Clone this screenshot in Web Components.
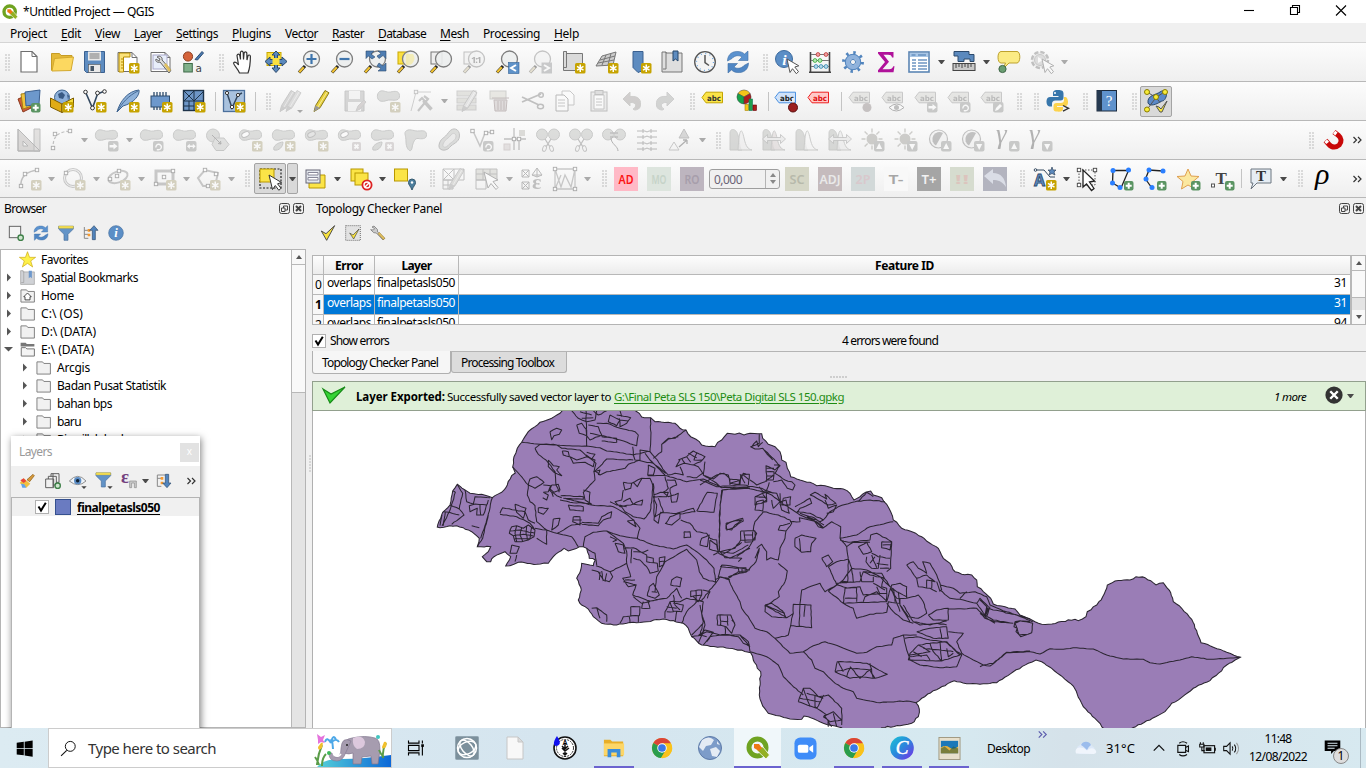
<!DOCTYPE html>
<html lang="en">
<head>
<meta charset="utf-8">
<title>*Untitled Project — QGIS</title>
<style>
html,body{margin:0;height:100%;overflow:hidden}
body{font:12px "Noto Sans","Open Sans",sans-serif;color:#000;background:#f0f0f0}
</style>
</head>
<body>
<qgis-window></qgis-window>
<script>
/* ---------- shared helper ---------- */
const define = (name, css, html, after) => customElements.define(name, class extends HTMLElement {
  connectedCallback() {
    if (this.shadowRoot) return;
    const root = this.attachShadow({mode: 'open'});
    const markup = typeof html === 'function' ? html(this) : html;
    root.innerHTML = `<style>*{box-sizing:border-box}${css}</style>${markup}`;
    if (after) after(this, root);
  }
});

/* ---------- label tracked to a fixed width ---------- */
define('fit-text', ':host{display:inline-block;white-space:pre;flex:none}', '<slot></slot>', el => {
  const w = +el.getAttribute('w');
  if (!w) return;
  const natural = el.getBoundingClientRect().width;
  el.style.letterSpacing = (w - natural) / el.textContent.length + 'px';
  el.style.width = w + 'px';
});

/* ---------- icons ---------- */
const star = '<rect x="13" y="13" width="10.500" height="10.500" rx="1.600" fill="#c6a300"/><path d="M18.250 14.500v7.500M15 16.400l6.500 3.700M21.500 16.400l-6.500 3.700" stroke="#fff" stroke-width="1.500"/>';
const plus = '<rect x="14" y="14" width="9.500" height="9.500" rx="2" fill="#5a9462"/><path d="M18.700 15.700v6M15.700 18.700h6" stroke="#fff" stroke-width="2"/>';
const sq = inner => '<rect x="13" y="13" width="10.500" height="10.500" rx="2" fill="#8c908c"/>' + inner;
const bArrow = sq('<path d="M14.500 17h4v-2l4 3.200-4 3.200v-2h-4z" fill="#fff"/>');
const bRot = sq('<path d="M16 19.500a2.700 2.700 0 1 1 2.600 2.200M16.800 21.700h2.500" stroke="#fff" stroke-width="1.400" fill="none"/>');
const bBoth = sq('<path d="M14 18.300l2.800-2.600v1.800h3v-1.800l2.800 2.600-2.800 2.600v-1.800h-3v1.800z" fill="#fff"/>');
const bX = '<rect x="14" y="14" width="9" height="9" rx="1.500" fill="#c8a8ac"/><path d="M16.500 16.500l4 4M20.500 16.500l-4 4" stroke="#fff" stroke-width="1.800"/>';
const bUp = sq('<path d="M18.200 15l3 6h-6z" fill="#fff"/>');
const bDn = sq('<path d="M18.200 22l3-6h-6z" fill="#fff"/>');
const bEdit = sq('<path d="M15 22l1-3 4-4 2 2-4 4z" fill="#fff"/>');
const blob = '<path d="M1.500 3.500C5-.5 9 4 13.500 3S22 1.500 22.500 6.500 18 11.500 14 11 8 13 4 12.200-.5 6.500 1.500 3.500Z" fill="#b3b9b0" stroke="#888e88"/>';
const lens = '<path d="M2 22.500l6-6.500" stroke="#222" stroke-width="3.200"/><path d="M2.200 22.300l4.600-5" stroke="#f1c232" stroke-width="2.200"/><circle cx="14.500" cy="9" r="8" fill="#eceeee" fill-opacity=".9" stroke="#7d7d7d" stroke-width="1.300"/>';
const tag = (f, s, t) => `<path d="M1 8.500l4-5.300h16.500v10.600H5z" fill="${f}" stroke="${s}"/><text x="13" y="11.500" font-family="DejaVu Sans,sans-serif" font-size="7.500" font-weight="700" text-anchor="middle" fill="${t}" textLength="14" lengthAdjust="spacingAndGlyphs">abc</text>`;
const pencil = (x, f = '#e8d13a', s = '#8a7a20') => `<g transform="translate(${x} 0)"><path d="M3 22.500l1.600-6L14 1.500l4 2.300-9 15z" fill="${f}" stroke="${s}"/><path d="M3 22.500l1.600-6 4.400 2.500z" fill="#999"/><path d="M7 18L16 3" stroke="#fff" stroke-opacity=".5"/></g>`;
const sheet = '<path d="M2 2.500h14l5 5v14H2z" fill="#fff" stroke="#6f6f6f"/><path d="M16 2.500v5h5" fill="none" stroke="#6f6f6f"/>';
const dot = (x, y, f = '#fff', s = '#444') => `<rect x="${x - 1.7}" y="${y - 1.7}" width="3.400" height="3.400" fill="${f}" stroke="${s}" stroke-width=".9"/>`;
const circ = (x, y, f = '#2a7fff', s = 'none') => `<circle cx="${x}" cy="${y}" r="2.500" fill="${f}" stroke="${s}"/>`;
const sync = '<path d="M1.500 11C1.500 4 7 1 12 1.500c2.500 0 5 1 6.500 2.600L22 1v9.500h-9.500L16 7C12.500 4.500 8 6 6 8.500Z" fill="#5b92cf" stroke="#3f6fa5" stroke-width=".6"/><path d="M22.500 13c0 7-5.500 10-10.500 9.500-2.500 0-5-1-6.500-2.600L2 23v-9.500h9.500L8 17c3.500 2.500 8 1 10-1.500Z" fill="#4f86c4" stroke="#3f6fa5" stroke-width=".6"/>';
const cursor = '<path d="M12 9l3 13.500 2.500-3.800 3.800 5 2.200-2-3.700-4.700 4-1.200z" fill="#fff" stroke="#555" stroke-width="1"/>';
const chrome = '<circle cx="12" cy="12" r="11" fill="#f9c21b"/><path d="M12 12L2.500 6.500A11 11 0 0 1 21.600 6.600L21 8H12Z" fill="#db4437"/><path d="M2.500 6.500A11 11 0 0 0 11 23l5-8.500L12 12Z" fill="#2a9d4c"/><path d="M11 23A11 11 0 0 0 21.700 6.800H12l4 8z" fill="#f9c21b"/><circle cx="12" cy="12" r="5.200" fill="#fff"/><circle cx="12" cy="12" r="4.200" fill="#3b78e7"/>';
const scissors = '<path d="M9 11l5 8M15 11l-5 8" stroke="#777" stroke-width="1.300"/><ellipse cx="8.500" cy="20.500" rx="1.800" ry="3" fill="none" stroke="#888" transform="rotate(20 8.500 20.500)"/><ellipse cx="15.500" cy="20.500" rx="1.800" ry="3" fill="none" stroke="#888" transform="rotate(-20 15.500 20.500)"/>';
const twoBlobs = '<circle cx="6" cy="6.500" r="5.500" fill="#b3b9b0" stroke="#888e88"/><circle cx="18" cy="6.500" r="5.500" fill="#b3b9b0" stroke="#888e88"/>';
const hist = (a, b) => `<path d="M1 22V5c0-5 6-5 8 2s1 13 4 15z" fill="${a}" stroke="#8f958c"/><path d="M9 22c1-18 3-26 6-12 2 9 4 11 8 12z" fill="${b}" fill-opacity=".7" stroke="#8f958c"/>`;
const hArrows = '<path d="M.5 11l5-4.500v3h13v-3l5 4.500-5 4.500v-3h-13v3z" fill="#ddd" stroke="#777" stroke-width=".8"/>';
const sun = '<circle cx="11" cy="11" r="5.500" fill="#98947a"/><path d="M11 .5v4M11 17.500v4M.5 11h4M17.500 11h4M3.600 3.600l3 3M18.400 3.600l-3 3M3.600 18.400l3-3" stroke="#98947a" stroke-width="1.400"/>';
const contrast = '<circle cx="10.500" cy="11" r="9" fill="#eee" stroke="#777" stroke-width="1.200"/><path d="M15 5a7 7 0 1 0-7 12.500z" fill="#777"/>';
const gamma = '<text x="0" y="15" font-size="27" font-style="italic" font-family="Liberation Serif,serif" fill="#555">γ</text>';
const wrench = '<path d="M3 3l3-1.500 5 5 .5 4L22 20l-2.500 2.500L9.500 12l-4-.5L1 7l4 .5 2-2z" fill="#ccc" stroke="#666"/><path d="M12 13l8 9 2.500-2-8.500-9z" fill="#e0c060" stroke="#8a6d20" stroke-width=".7"/>';
const funnel = '<path d="M1 2h22v4l-8 8v9H9v-9L1 6z" fill="#6293c7" stroke="#476e9b"/><path d="M1 1.500h22v3.500H1z" fill="#f5df55" stroke="#b0a030" stroke-width=".5"/>';
const folder = '<path d="M1.500 3h9l2 2.500h10.500v17h-21.500z" fill="#f1f1f1" stroke="#7c7c7c" stroke-width="1.500"/>';
const block = (bg, fg, t) => `<rect width="24" height="24" fill="${bg}"/><text x="12" y="17" font-size="13" font-weight="600" font-family="Noto Sans,sans-serif" text-anchor="middle" fill="${fg}" textLength="${t.length > 2 ? 21 : 15}" lengthAdjust="spacingAndGlyphs">${t}</text>`;
const mesh = '<rect x="1.500" y="1.500" width="20" height="20" fill="#6d96c7" stroke="#1e3349" stroke-width="1.400"/><path d="M12 2v20M2 12h20M2 2l10 10M12 2L2 12M22 2L12 12M7 12v10M2 17h10" stroke="#1e3349" fill="none"/>';

const icons = {
  qgis: '<circle cx="11.500" cy="11.500" r="8.500" fill="none" stroke="#6fa321" stroke-width="5"/><path d="M11 11h6l6.500 8-3.500 4-9-8.500z" fill="#93b023" stroke="#fff" stroke-width=".8"/><path d="M8 8h5l3 4-3 3-5-3z" fill="#ee7913"/>',
  new: '<path d="M4 1.500h11l5 5v15.500H4z" fill="#fff" stroke="#6f6f6f" stroke-width="1.200"/><path d="M15 1.500v5h5" fill="none" stroke="#6f6f6f"/>',
  open: '<path d="M1.500 20.500V3.500h8l1.500 2h11v4" fill="#e4b938" stroke="#c69c26"/><path d="M2 21L4.500 8.500l19-1.500-2.500 13.500z" fill="#fcd860" stroke="#d3a92e"/>',
  save: '<path d="M1.500 1.500h20v21H3.500l-2-2z" fill="#5e8cc0" stroke="#3a6090"/><rect x="5" y="1.500" width="13" height="9" fill="#e9e9e9"/><path d="M6.500 4h10M6.500 6h10M6.500 8h10" stroke="#777"/><rect x="5.500" y="14.500" width="12" height="8" fill="#e9e9e9" stroke="#555" stroke-width=".6"/><rect x="7.500" y="16" width="3.500" height="5" fill="#456"/>',
  layout: sheet + '<path d="M3 3h11v4H7.500v15H3z" fill="#fbe27a" stroke="#b68c00"/><path d="M5 9h2M5 12h2M5 15h2M5 18h2" stroke="#b68c00"/>' + star,
  layoutmgr: sheet + '<rect x="4" y="5" width="14" height="14" fill="#e8eefa" stroke="#aac"/><path d="M8 7c2-2 6 0 5 3l9 10-2 3-9-11c-3 1-5-1-4-3l3 2 1-2z" fill="#ddd" stroke="#666"/><path d="M15 15l5 7 2-2-5-7z" fill="#e0c060"/>',
  style: '<circle cx="6" cy="6.500" r="4.600" fill="#d4633a" stroke="#8d3c1e"/><path d="M13 9.500l7-8 1.500 1.500-6 7z" fill="#4a7ab0" stroke="#2f5078"/><rect x="1.800" y="13.500" width="8.500" height="8.500" fill="#7fb08a" stroke="#3e6a48"/><text x="13.500" y="21.500" font-size="10.500" font-family="DejaVu Sans,sans-serif" fill="#444">a</text>',
  hand: '<path d="M8.500 23C6.500 18 3 15.500 2.500 13c1.500-2 3.500 0 5 2L6 5.500c.5-1.800 2.300-1.800 2.800 0l.7 4-.1-7c.5-1.800 2.300-1.800 2.800 0l.3 7 .6-6.500c.5-1.500 2.300-1.500 2.700 0l.2 7 .9-4c.6-1.500 2.300-1.300 2.500.3 0 6-.2 11-2.400 16.700z" fill="#fff" stroke="#333" stroke-width="1.200"/>',
  pan: '<rect x="3" y="2.500" width="14" height="13" fill="#fbe040" stroke="#c9a800"/><path d="M12 1l4 4h-2.500v4.500H18V7l5 4.500-5 4.500v-2.500h-4.500V18H16l-4 4.500L8 18h2.500v-4.500H6V16l-5-4.500L6 7v2.500h4.500V5H8z" fill="#5b89bd" stroke="#2c4a6c"/><rect x="8.500" y="8" width="7" height="7" fill="#fbe040"/>',
  zoomin: lens + '<path d="M14.500 4v10M9.500 9h10" stroke="#3f75ac" stroke-width="2.200"/>',
  zoomout: lens + '<path d="M9.500 9h10" stroke="#3f75ac" stroke-width="2.200"/>',
  zoomfull: lens + '<path d="M3 1h8l-3 3 4 3-3 2-3.500-3L3 8.500zM23 1v7.500l-3-3-4 3-2-2.500 4-2.500-3-2.500zM23 21v-8l-3 3-4-3-2 3 4 2.500-3 2.500z" fill="#4e7db2" stroke="#2c4a6c" stroke-width=".6"/>',
  zoomsel: '<rect x="2" y="2" width="10" height="12" fill="#fbe040" stroke="#c9a800"/>' + lens + '<path d="M10 4v11a7 7 0 0 0 7-11z" fill="#f4eaa0" opacity=".7"/>',
  zoomlayer: '<rect x="2" y="2" width="11" height="12" fill="#eee" stroke="#777"/>' + lens,
  zoomnative: '<rect x="2" y="2" width="11" height="12" fill="#eee" stroke="#777"/>' + lens + '<text x="14.500" y="12.500" font-size="9.500" text-anchor="middle" font-family="Noto Sans,sans-serif" font-weight="700" fill="#555" textLength="11">1:1</text>',
  zoomlast: lens + '<rect x="13.500" y="12.500" width="10.500" height="11" fill="#5e92c9" stroke="#2f5f95" stroke-width=".6"/><path d="M21 15l-5 3 5 3" stroke="#fff" stroke-width="2" fill="none"/>',
  zoomnext: lens + '<rect x="13.500" y="12.500" width="10.500" height="11" fill="#8a9098"/><path d="M16 15l5 3-5 3" stroke="#fff" stroke-width="2" fill="none"/>',
  newmap: '<path d="M1.500 1.500h3v2h16v17h-19z" fill="#dadada" stroke="#777"/><path d="M4.500 1.500v16h-3" stroke="#777"/>' + star,
  map3d: '<path d="M1 16L7 6l14-4-3 13z" fill="#ccc" stroke="#777"/><path d="M5 10l15-4M3 13l16-3M11 5L7 15M16 3.500L13 15" stroke="#777"/>' + star,
  bmnew: '<path d="M5 1.500h10v19l-5 2-5-5z" fill="#5e8cc0" stroke="#3a6090"/>' + star,
  bm: '<path d="M2 2h4v1h16v19H2z" fill="#dedede" stroke="#777"/><path d="M6 2v17H3" fill="none" stroke="#777"/><path d="M13 1h5v10l-2.500-2L13 11z" fill="#5e8cc0" stroke="#24466b"/>',
  clock: '<circle cx="12" cy="12" r="10.300" fill="#f4f4f4" stroke="#555" stroke-width="1.300"/><path d="M12 5v7.500l4 3" stroke="#555" stroke-width="1.500" fill="none"/><circle cx="12" cy="12" r="8.500" fill="none" stroke="#6fa8e0" stroke-width="1.300" stroke-dasharray="1 3.450"/>',
  refresh: sync,
  identify: '<circle cx="9" cy="9" r="8.500" fill="#5b8ec6" stroke="#3d6c9f"/><text x="9.500" y="14.500" font-size="15.500" font-weight="700" font-style="italic" text-anchor="middle" font-family="Liberation Serif,serif" fill="#fff">i</text>' + cursor,
  abacus: '<path d="M2.500 2v20M21.500 2v20M1 22.300h22" stroke="#444" stroke-width="1.600"/><path d="M3 4.500h18M3 10.500h18M3 16.500h18" stroke="#777"/><g stroke-width=".8"><g fill="#f0a0a0" stroke="#b33"><circle cx="10" cy="4.500" r="1.900"/><circle cx="18" cy="4.500" r="1.900"/></g><g fill="#b6e8b6" stroke="#3a3"><circle cx="7" cy="10.500" r="1.900"/><circle cx="12" cy="10.500" r="1.900"/></g><g fill="#b6daf0" stroke="#38a"><circle cx="8" cy="16.500" r="1.900"/><circle cx="13" cy="16.500" r="1.900"/><circle cx="18" cy="16.500" r="1.900"/></g></g>',
  gear: '<circle cx="12" cy="12" r="9.200" fill="none" stroke="#5184bd" stroke-width="3.500" stroke-dasharray="2.400 4.825"/><circle cx="12" cy="12" r="5.500" fill="none" stroke="#8fb2dc" stroke-width="5"/><circle cx="12" cy="12" r="7.700" fill="none" stroke="#5184bd"/><circle cx="12" cy="12" r="2.600" fill="#f4f4f4" stroke="#5184bd"/>',
  sigma: '<path d="M4 2h15.500v5.500h-1.500c-.5-2-1.500-2.700-4-2.700H9.500l5.500 7-6.500 7.500H15c2.500 0 3.500-1 4.300-3H20.500L19.500 22.300H4v-2l7-8.300L4 3.500z" fill="#b0129a"/>',
  table: '<rect x="2" y="2" width="20" height="20" fill="#fff" stroke="#5c86b4" stroke-width="1.600"/><path d="M3 5h18" stroke="#a9c6e6" stroke-width="4"/><path d="M4.500 5h4M11 5h8" stroke="#4476ac"/><path d="M5 10h4M5 13h4M5 16h4M5 19h4M11 10h9M11 13h9M11 16h9M11 19h9" stroke="#6e95c2" stroke-width="1.300"/>',
  measure: '<path d="M2 1.500h15v3h5v7h-4V9h-6v2.500H6V6H2z" fill="#5b89bd" stroke="#2c4a6c"/><rect x="1" y="13.500" width="22" height="7" fill="#c9c9c9" stroke="#444"/><path d="M4 14v4M7 14v3M10 14v4M13 14v3M16 14v4M19 14v3" stroke="#444"/>',
  tip: '<path d="M4 1.500h16c4 0 3.500 11.500 0 11.500h-8l-6 6 2.500-6H4C0 13 0 1.500 4 1.500z" fill="#fbeb84" stroke="#bda22e"/><circle cx="5.500" cy="19" r="3.600" fill="#6a9e72" stroke="#3f6647"/>',
  action: '<circle cx="10" cy="10" r="8" fill="#ddd" stroke="#777" stroke-width="2.500" stroke-dasharray="4.300 2"/><circle cx="10" cy="10" r="5.500" fill="#bbb" stroke="#888"/><path d="M8 7l5 3-5 3z" fill="#fff"/>' + cursor,
  source: '<path d="M1 10l7-3 6 12-8 4z" fill="#cf5c38" stroke="#8a3a20"/><path d="M4 5l8-1 3 13-9 3z" fill="#f0c33c" stroke="#a67f10"/><path d="M8 3l15-2-1 14-13 2z" fill="#6d98cc" stroke="#3a5f90"/>' + plus,
  geopkg: '<circle cx="12" cy="8.500" r="7.500" fill="#8eb1da" stroke="#3d648e"/><path d="M8 5l4-2 3 3-2 4-4-1zM17 5l2 2-1 4z" fill="#385a84"/><path d="M.5 9L12 15v8.500L.5 18z" fill="#e0ac16" stroke="#7c5d00"/><path d="M12 15l11.500-6v9L12 23.500z" fill="#f6dc3c" stroke="#7c5d00"/>' + star,
  shp: '<path d="M2.500 3l7 16 5-14 7-3" fill="none" stroke="#33485f" stroke-width="1.600"/><circle cx="2.500" cy="3" r="1.800" fill="#fff" stroke="#333"/><circle cx="9.500" cy="19" r="1.900" fill="#fff" stroke="#333"/><circle cx="14.500" cy="4" r="1.900" fill="#fff" stroke="#333"/><circle cx="21.500" cy="2.500" r="1.800" fill="#fff" stroke="#333"/>' + star,
  feather: '<path d="M1 23C4 12 12 2 23 1c1 5-5 13-16 16z" fill="#8fb2da" stroke="#3f6490"/><path d="M1 23C6 14 12 7 22 2" stroke="#3f6490" stroke-width=".9" fill="none"/>' + star,
  chip: '<rect x="2" y="7" width="18.500" height="11" fill="#6d98cc" stroke="#2c4a6c"/><path d="M5 3v4M8 3v4M11 3v4M14 3v4M17 3v4M5 18v3M8 18v3M11 18v3M14 18v3" stroke="#2c4a6c" stroke-width="1.300"/>' + star,
  mesh: mesh + star,
  virtual: '<rect x="1.500" y="1.500" width="21" height="21" fill="#a9c2de" stroke="#4b6f9b" stroke-width="1.300"/><path d="M5 4l5 15 6-13 4-2" fill="none" stroke="#33485f" stroke-width="1.500"/><circle cx="5" cy="4" r="1.600" fill="#fff" stroke="#333"/><circle cx="10" cy="18" r="1.700" fill="#fff" stroke="#333"/><circle cx="16" cy="6" r="1.600" fill="#fff" stroke="#333"/>' + star,
  pencils: pencil(-2, '#aaa', '#888') + pencil(4, '#bbb', '#999') + '<path d="M18 21h6l-3 3z" fill="#444"/>',
  pencil: pencil(1),
  saveedit: '<path d="M2 2h19v20H2z" fill="#aaa" stroke="#888"/><rect x="6" y="2" width="11" height="8" fill="#eee"/><rect x="5" y="13" width="13" height="9" fill="#eee"/><path d="M13 22l2-5 6-6 2 2-6 7z" fill="#c0a0a0" stroke="#999"/>',
  addfeat: blob + star,
  vertex: '<path d="M6 3h15M6 3L1 22" stroke="#999"/>' + dot(6, 3, '#eee', '#777') + '<path d="M8 22L18 10l-4-3M13 12l8 9M9 12l3-3 10 11" stroke="#888" stroke-width="2.200" fill="none"/>',
  form: '<rect x="2" y="2" width="19" height="5" fill="#c9c6a6" stroke="#999"/><rect x="2" y="9" width="19" height="5" fill="#c9c6a6" stroke="#999"/><rect x="2" y="16" width="19" height="5" fill="#c9c6a6" stroke="#999"/>' + pencil(4, '#ccc', '#888'),
  trash: '<rect x="2" y="2" width="16" height="8" fill="#d8d4a8" stroke="#998"/><path d="M4 9h17M6 11h13l-1 11H7z" fill="#d8b4b4" stroke="#a66"/><path d="M10 12v9M13 12v9M16 12v9" stroke="#a66"/>',
  cut: '<path d="M1 8l17 8M1 13l19-8" stroke="#777" stroke-width="1.800"/><circle cx="20" cy="6" r="2.300" fill="none" stroke="#777" stroke-width="1.500"/><ellipse cx="19.500" cy="17.500" rx="3" ry="2.300" fill="none" stroke="#777" stroke-width="1.500"/>',
  copy: '<path d="M9 2h8l4 4v10H9z" fill="#fff" stroke="#888"/><path d="M3 6h8l4 4v12H3z" fill="#fff" stroke="#666"/><path d="M5 11h7M5 14h7M5 17h7" stroke="#888"/>',
  paste: '<rect x="4" y="3" width="16" height="19" fill="#ddd" stroke="#777"/><path d="M7 6h10v14H7z" fill="#fff" stroke="#888"/><rect x="8" y="1.500" width="8" height="4" fill="#bbb" stroke="#777"/><path d="M9 10h6M9 13h6M9 16h6" stroke="#888"/>',
  undo: '<path d="M3 10l7-7v4.500c9-1 12 4 10 11-3 3-6 3-7 1.500 4-2 4-7-3-6.500V17z" fill="#a8968e" stroke="#998"/>',
  redo: '<path d="M21 10l-7-7v4.500c-9-1-12 4-10 11 3 3 6 3 7 1.500-4-2-4-7 3-6.500V17z" fill="#a0a8a0" stroke="#999"/>',
  label: tag('#fbe447', '#c3a400', '#333'),
  chart: '<g stroke="#444" stroke-width=".5"><path d="M9 8L2.900 4.500A7 7 0 0 1 15.100 4.500z" fill="#f5c518"/><path d="M9 8v7A7 7 0 0 1 2.900 4.500z" fill="#16a34a"/><path d="M9 8l6.100-3.500A7 7 0 0 1 9 15z" fill="#b01c1c"/></g><rect x="10" y="15.500" width="3.500" height="6" fill="#f5c518" stroke="#a80" stroke-width=".6"/><rect x="14" y="10" width="3.500" height="11.500" fill="#20a050" stroke="#175" stroke-width=".6"/><rect x="18" y="16" width="3.500" height="5.500" fill="#b01c1c" stroke="#600" stroke-width=".6"/>',
  labelpin: tag('#cfe2fa', '#4a90e0', '#222') + '<path d="M19 9v7" stroke="#eee" stroke-width="2"/><circle cx="19" cy="18.500" r="4.500" fill="#9c2020" stroke="#5a0d0d"/>',
  labelred: tag('#ffc9c9', '#ee2020', '#e01010'),
  gl1: tag('#cfcfbc', '#888', '#666') + '<circle cx="19" cy="18.500" r="4.500" fill="#a07878"/>',
  gl2: tag('#cfcfbc', '#888', '#666') + '<path d="M8 18.500q8-7 15 0-8 7-15 0z" fill="#fff" stroke="#555"/><circle cx="15.500" cy="18.500" r="2.500" fill="#777"/>',
  gl3: tag('#cfcfbc', '#888', '#666') + bArrow,
  gl4: tag('#cfcfbc', '#888', '#666') + bRot,
  gl5: tag('#cfcfbc', '#888', '#666') + bEdit,
  python: '<path d="M12 1c-5 0-5 2-5 4v2h5.500v1H4c-3 0-3.500 3-3.500 5s1 4.500 3 4.500H6V15c0-2 1-3.500 3.500-3.500h5c2 0 3-1 3-3V4.500C17.500 2 16 1 12 1z" fill="#3776ab"/><path d="M10 22.500c5 .5 7 0 7-3V18h-6v-1h9c2-.5 2-3 2-4.500S21 8 19.500 8H18v3c0 2-1 3-3.500 3h-4c-2 0-3 1-3 3v3c0 1.500 1 2.300 2.500 2.500z" fill="#fcd34d"/><circle cx="9" cy="4" r="1" fill="#fff"/><path d="M17 16.500l5.500 2.800-5.500 2.800" fill="none" stroke="#333" stroke-width="1.400"/>',
  help: '<rect x="2" y="1.500" width="19.500" height="20.500" fill="#5f92cc" stroke="#1c2b3d"/><rect x="2" y="1.500" width="5" height="20.500" fill="#263950"/><text x="14.200" y="16.500" font-size="15" text-anchor="middle" fill="#fff" font-family="Liberation Serif,serif">?</text>',
  topo: '<path d="M4 14C3 6 12 6 16 3s8 0 6 5-3 3-6 5-10 5-12 1z" fill="#5b89c8" stroke="#2c4a6c"/><path d="M3 3l9 5.500L21 2.500M12 8.500L3 20.500M12 8.500l4 5" stroke="#555" fill="none"/>' + circ(3, 3, '#f8ec3a', '#8a7d00') + circ(12, 8, '#f8ec3a', '#8a7d00') + circ(21, 3, '#f8ec3a', '#8a7d00') + circ(3, 20.500, '#f8ec3a', '#8a7d00') + '<path d="M12 17l3 1 2 2 6-8-5 11h-2z" fill="#f8e83a" stroke="#555"/>',
  tri: '<path d="M1 1v22h22z" fill="#bfaea4" stroke="#666"/><path d="M6 13v5h5z" fill="#eee" stroke="#666"/><path d="M17 1h6v22h-6z" fill="#cbbfb8" stroke="#777"/><path d="M1 1v22h22z" fill="none" stroke="#666"/>',
  curve: '<path d="M3 21C3 12 4 4 20 3" fill="none" stroke="#777" stroke-width="1.200" stroke-dasharray="3 2"/>' + dot(3, 20) + dot(5, 6) + dot(20, 3),
  bMove: blob + bArrow, bRotate: blob + bRot, bScale: blob + bBoth,
  bSimplify: '<circle cx="7" cy="7.500" r="6.500" fill="#b3b9b0" stroke="#888e88"/><path d="M9 10h9l5 6.500-5 6H10l-4-6z" fill="#c0c5be" stroke="#888e88"/><path d="M6 7l9 9M15 16l-3-.5M15 16l-.5-3" stroke="#555"/>',
  bRing: blob + '<ellipse cx="6.500" cy="6.500" rx="4" ry="2.500" transform="rotate(-25 6.500 6.500)" fill="#fff" stroke="#777"/>' + star,
  bPart: blob + '<path d="M2 22c-2-4 5-8 9-8 0 5-4 9-9 8z" fill="#b3b9b0" stroke="#888e88"/>' + star,
  bFill: blob + '<ellipse cx="6.500" cy="6.500" rx="4" ry="2.500" transform="rotate(-25 6.500 6.500)" fill="#c9ccc6" stroke="#777"/>' + star,
  bDelRing: blob + '<ellipse cx="6.500" cy="6.500" rx="4" ry="2.500" transform="rotate(-25 6.500 6.500)" fill="#fff" stroke="#777"/>' + bX,
  bDelPart: blob + '<path d="M2 22c-2-4 5-8 9-8 0 5-4 9-9 8z" fill="#b3b9b0" stroke="#888e88"/>' + bX,
  bReshape: '<path d="M1.500 3.500C5 0 9 3 13.500 3S22 1.500 22.500 6.500 17 11 14 10.500 9 14 8 20s-6 1-6-6-2-8-.5-10.500Z" fill="#b3b9b0" stroke="#888e88"/>',
  bOffset: '<path d="M2.500 15C-.5 23 9 24 12.500 19.500S22 15 22.500 8 16-2 11.500 4.500 5 9 2.500 15z" fill="#b3b9b0" stroke="#777"/><path d="M6 16c-1 4 3 4 5 1.500s7.500-5 8-8.500-3-5-5-2-7 5-8 9z" fill="#dadcd8" stroke="#999"/>',
  vRot: '<path d="M3 3l7 15 5-13 7-1" fill="none" stroke="#888" stroke-width="1.500"/>' + dot(2.500, 3) + dot(16, 5) + dot(22, 4) + bRot,
  cross: '<path d="M11 0v22M1 11h22M16 11v11" stroke="#777" stroke-width="1.300"/>' + dot(11, 11) + dot(16, 11) + '<rect x="16" y="2" width="6" height="6" fill="#b9b598"/><rect x="1" y="16" width="6" height="6" fill="#ddc0c0" stroke="#c99"/>',
  split: twoBlobs + scissors,
  merge: twoBlobs + '<path d="M8 5h8M8 9h8M9 10c0 6 7 8 7 13" stroke="#555" fill="none"/>',
  lines: '<path d="M2 3h8l2 1 2-1h8M2 9h8l2-1 2 1h8M2 15h8l2 1 2-1h8M2 21h8l2-1 2 1h8M8 1v4M16 1v4M8 7v4M16 7v4M8 13v4M16 13v4M8 19v4M16 19v4" stroke="#666" fill="none"/>',
  triangles: '<path d="M16 1l5 9H11z" fill="#aaa" stroke="#777"/><path d="M6 14l5 8H1z" fill="none" stroke="#888"/><path d="M11 19l8-7M19 12v4M19 12h-4" stroke="#555" stroke-width="1.300"/>',
  h1: hist('#aab4a2', '#e6dede'), h2: hist('#aab4a2', '#daa') + hArrows, h3: hist('#aab4a2', '#f4f4f4'), h4: hist('#aab4a2', '#ddd') + hArrows,
  sunUp: sun + bUp, sunDn: sun + bDn, conUp: contrast + bUp, conDn: contrast + bDn, gamUp: gamma + bUp, gamDn: gamma + bDn,
  magnet: '<path d="M4.500 12.500L8 16.500C11 20 15.500 19.500 18.200 17 21 14 20.500 10 17.500 7.500L13 4" fill="none" stroke="#c80808" stroke-width="5"/><path d="M4.700 12.700l2 2.200M13.200 4.200l2.200 1.800" stroke="#fff" stroke-width="3.600"/>',
  arc: '<path d="M3 20C2 10 8 4 21 3" fill="none" stroke="#777" stroke-width="1.500"/>' + dot(3, 19) + dot(7, 7) + dot(19, 3) + star,
  circle: '<circle cx="11" cy="11" r="8.500" fill="none" stroke="#888" stroke-width="3"/><circle cx="11" cy="11" r="8.500" fill="none" stroke="#eee"/>' + dot(4, 6) + dot(18, 15) + star,
  ellipse: '<ellipse cx="11" cy="10" rx="10" ry="5.500" transform="rotate(-20 11 10)" fill="none" stroke="#888" stroke-width="2"/>' + dot(12, 4) + dot(10, 9) + dot(3, 12) + star,
  rect: '<path d="M3 4h17v13H3z" fill="none" stroke="#888" stroke-width="3"/>' + dot(3, 17) + dot(20, 4) + dot(11, 10) + star,
  polygon: '<path d="M1 11L8 3l13 3-3 13H6z" fill="none" stroke="#888" stroke-width="2"/>' + dot(8, 3) + dot(19, 7) + dot(11, 19) + star,
  select: '<rect x="2" y="2" width="21" height="19" fill="none" stroke="#222" stroke-width="1.200" stroke-dasharray="2 1.500"/><rect x="2" y="2" width="14" height="13" fill="#fbe447" stroke="#b89700"/><path d="M11 8l3.500 14.500 2.800-4 3.500 4.800 2.200-2-3.500-4.500 4-1.300z" fill="#fff" stroke="#333"/>',
  selform: '<path d="M5 8h16v13H5z" fill="#fbe447" stroke="#b89700"/><rect x="2" y="3" width="14" height="13" fill="#e4e8ee" stroke="#667"/><path d="M4 5.500h10v2.500H4zM4 10.500h10v2.500H4z" fill="#fff" stroke="#889"/>',
  deselect: '<rect x="2" y="2" width="12" height="12" fill="#fbe447" stroke="#b89700"/><rect x="6" y="6" width="13" height="12" fill="#fbe447" stroke="#b89700"/><circle cx="18" cy="18" r="5.500" fill="#d22"/><circle cx="18" cy="18" r="3" fill="none" stroke="#fff" stroke-width="1.400"/><path d="M16 20l4-4" stroke="#fff" stroke-width="1.400"/>',
  selloc: '<rect x="1.500" y="2" width="13" height="12" fill="#fbe447" stroke="#b89700"/><path d="M19 23c-1.500-4-3.500-5-3.500-7.500a3.500 3.500 0 0 1 7 0c0 2.500-2 3.500-3.500 7.500z" fill="#4d7f9e" stroke="#35596f"/><circle cx="19" cy="15.500" r="1.200" fill="#fff"/>',
  m1: '<path d="M1 2h21v11H1zM1 2l11 11L22 2M1 13h10v9H1zM6 13v9M12 2v11M1 18h10M1 13L12 2" fill="none" stroke="#777"/>' + pencil(4, '#bba', '#888'),
  m2: '<rect x="1" y="2" width="21" height="11" fill="#c6c6a8"/><path d="M1 2h21v11H1zM1 7h21M8 2v11M15 2v11M1 13h10v9H1z" fill="none" stroke="#777"/><path d="M9 5l4 16 3-4.500 5 6 2-2-5-6 5-1.500z" fill="#fff" stroke="#555"/>',
  m3: '<path d="M2 3h7v7H2zM2 3l7 7M9 3l-7 7M2 15h7v7H2zM2 15l7 7M9 15l-7 7M17 1l5 7-5 2-5-2zM12 8h10M17 1v9" fill="none" stroke="#666"/><text x="12" y="22" font-size="22" font-family="Liberation Serif,serif" font-weight="700" fill="#777">ε</text>',
  m4: '<path d="M2 2h20v20H2zM2 2l6 18L12 8l6 12L22 2M2 22l6-14" fill="none" stroke="#888" stroke-width="1.300"/>' + dot(2, 2) + dot(22, 2) + dot(2, 22) + dot(22, 22),
  AD: block('#ffb9c6', '#fb1414', 'AD'), MO: block('#dde5de', '#c6d3c8', 'MO'), RO: block('#bdb5bf', '#a79eab', 'RO'),
  SC: block('#d5d6c6', '#b7b9ab', 'SC'), ADJ: block('#c5bbbd', '#e9e9e9', 'ADJ'), P2: block('#d2d9d9', '#d9c8cc', '2P'),
  Tm: block('#f8f8f8', '#a6a6a6', 'T-'), Tp: block('#a5a5a5', '#f2f2f2', 'T+'), ex: block('#d6dccf', '#dcc4bd', '!!'),
  back: '<rect width="24" height="24" fill="#b3b4bf"/><path d="M1 9l9-7v4c8 0 12 5 13 14-4-6-8-7-13-7v4z" fill="#dadde6"/>',
  annot: '<path d="M2 3h9l6 7h5" stroke="#33485f" fill="none"/><circle cx="2.500" cy="3" r="1.300" fill="#fff" stroke="#33485f"/><path d="M19 0l1 3h3l-2 2 1 3-3-1.500L16 8l1-3-2-2h3z" fill="#5b89bd" stroke="#33485f" stroke-width=".7"/><text x="1" y="19" font-size="16" font-weight="700" font-family="Noto Sans,sans-serif" fill="#5b89bd" stroke="#2c4a6c" stroke-width=".8">A</text>' + star,
  annsel: '<path d="M3 3h16v15H3z" fill="none" stroke="#555" stroke-dasharray="1.500 1.500"/>' + dot(3, 3) + dot(19, 3) + dot(3, 18) + '<path d="M7 3v17l3.500-3 5 6.500 2.500-2-4.500-6.500 5-1z" fill="#fff" stroke="#222" stroke-width="1.300"/>',
  annpoly: '<path d="M3 3.500h15.500L11 21l-8.500-5z" fill="none" stroke="#222" stroke-width="1.300"/>' + circ(3, 3.500) + circ(18.500, 3) + circ(2.500, 16) + circ(10, 20.500) + plus,
  annline: '<path d="M20 4L6 3 2.500 12l6 8.500" fill="none" stroke="#222" stroke-width="1.300"/>' + circ(20, 4) + circ(6, 3) + circ(3, 12) + circ(9, 20.500) + plus,
  annstar: '<path d="M11 2l3 7 8 .5-6 5 2 7.500-7-4-6.500 4L6 14.500 0 9.500 8 9z" fill="#fbe8a0" stroke="#dfa050"/>' + plus,
  anntext: '<text x="4.500" y="17" font-size="17" font-family="Liberation Serif,serif" font-weight="700" fill="#444">T</text><rect x=".5" y="17" width="3" height="3" fill="#fff" stroke="#555"/>' + plus,
  annballoon: '<path d="M2 2h20v14H8l-6 6 2-6H2z" fill="#e6edf4" stroke="#6d7680"/><text x="12" y="14" font-size="15" text-anchor="middle" font-family="Liberation Serif,serif" font-weight="700" fill="#333">T</text>',
  rho: '<text x="4" y="16.500" font-size="30" font-style="italic" font-family="Liberation Serif,serif" fill="#000">ρ</text>',
  more: '<path d="M8.500 9l3 3-3 3M13 9l3 3-3 3" fill="none" stroke="#333" stroke-width="1.200"/>',
  addlayer: '<rect x="2" y="2" width="17" height="17" fill="#f4f4f4" stroke="#666" stroke-width="1.500"/><circle cx="19" cy="19" r="4" fill="#cfe6cf" stroke="#3e8048" stroke-width="2"/>',
  funnel, collapse: '<path d="M2 3v17h6M2 8h6M2 14h6" stroke="#888" fill="none" stroke-width="1.500"/><path d="M7 6h4v4H7zM7 13h4v4H7z" fill="#f79a2e"/><path d="M16.500 1l6 7h-4v14h-4.500V8h-4z" fill="#5184bd" stroke="#2c4a6c"/>',
  expand: '<path d="M2 3v17h6M2 3h12M2 8h6" stroke="#888" fill="none" stroke-width="1.500"/><path d="M7 6h4v4H7zM7 13h4v4H7z" fill="#f79a2e"/><path d="M16.500 22l6-7h-3.500V2h-5v13h-4z" fill="#5184bd" stroke="#2c4a6c"/>',
  info: '<circle cx="12" cy="12" r="11" fill="#5b8ec6" stroke="#456f9e"/><text x="12" y="18.500" font-size="19" font-weight="700" font-style="italic" text-anchor="middle" font-family="Liberation Serif,serif" fill="#fff">i</text>',
  favorite: '<path d="M12-.5l3.300 9H25l-7.800 5.800 3 9.700-8.200-5.800L3.800 24l3-9.700L-1 8.500h9.700z" fill="#fdf04a" stroke="#c9a30c"/>',
  home: folder + '<path d="M6 14l6-6 6 6h-2v5H8v-5z" fill="#fff" stroke="#333" stroke-width="1.400"/>',
  folder, folderopen: '<path d="M1 1h8l2 2h12v4H1z" fill="#777"/><path d="M2 22.500V9h7l2 2h12v11.500z" fill="#f4f4f4" stroke="#777" stroke-width="1.600"/>',
  bmtree: '<path d="M1 1h4v2h18v20H1z" fill="#d0d2d6" stroke="#999"/><path d="M6 2v18H2" stroke="#999" fill="none"/><path d="M14 1h5v12l-2.500-2-2.500 2z" fill="#6d98cc"/>',
  check: '<path d="M2 9l7 4L22 1 10 23z" fill="#f8e23c" stroke="#444" stroke-width="1.400"/>',
  checksel: '<rect x="1" y="1" width="22" height="22" fill="#e2e2e2" stroke="#333" stroke-dasharray="1.500 1.500"/><path d="M7 12l5 3 9-9-8 15z" fill="#f8e23c" stroke="#444"/>',
  wrench, ok: '<path d="M1 5l8 5L23 3 8 19z" fill="#35d435" stroke="#178a17" stroke-width="1.200"/>',
  close: '<circle cx="12" cy="12" r="11.500" fill="#333"/><path d="M7 7l10 10M17 7L7 17" stroke="#fff" stroke-width="3.200"/>',
  brush: '<path d="M12 10l9-8 2 2-7 9z" fill="#d69a3c" stroke="#8a5a14"/><path d="M7 8l10 8-6 6L1 15z" fill="#f0c040"/><path d="M2 11l5-3 4 4-4 3z" fill="#e8443a"/><path d="M3 16l5 1 3 5-6 0z" fill="#62a2e8"/>',
  group: '<path d="M1 9h12v13H1zM5 9V5h12v13h-4M9 5V1h12v13h-4M12 1v20" fill="none" stroke="#555" stroke-width="1.400"/><circle cx="19" cy="19" r="4" fill="#cfe6cf" stroke="#3e8048" stroke-width="2"/>',
  eye: '<path d="M-1 12q12.500-14 25 0-12 11-25 0z" fill="#eef3f8" stroke="#888" stroke-width="1.400"/><circle cx="11.500" cy="11.500" r="5.500" fill="#5b8cc4"/><circle cx="11.500" cy="11.500" r="2.600" fill="#123"/><path d="M17 20h8l-4 4z" fill="#444"/>',
  funnel2: '<g transform="translate(-1 -2)">' + funnel + '</g><path d="M17 20h8l-4 4z" fill="#444"/>',
  eps: '<text x="0" y="15" font-size="28" font-family="Liberation Serif,serif" font-weight="700" fill="#73417f">ε</text><path d="M13 22v-10h10v10h-3v-7h-4v7z" fill="#ccc" stroke="#888"/>',
  start: '<path d="M1 4l10-1.500V11.500H1zM12.200 2.300L23.500.8v10.700H12.200zM1 12.700h10v9L1 20.400zM12.200 12.700h11.300v11L12.200 22z" fill="#000"/>',
  search: '<circle cx="14.500" cy="9" r="7" fill="none" stroke="#111" stroke-width="1.400"/><path d="M9.500 14.500L1.500 22.500" stroke="#111" stroke-width="1.500"/>',
  taskview: '<path d="M2 2v3.500h14V2M2 22v-3.500h14V22M2 8.500h14v7H2zM20.500 2v4M20.500 9v13" fill="none" stroke="#000" stroke-width="1.500"/><path d="M19 7h3.500v3.500H19z" fill="#000"/>',
  net: '<rect x=".5" y=".5" width="23" height="23" rx="1" fill="#7c909c" stroke="#93a6b2"/><circle cx="12" cy="12" r="9.500" fill="none" stroke="#fff" stroke-width="1.500"/><g fill="none" stroke="#fff" stroke-width="1.500"><ellipse cx="12" cy="12" rx="9.500" ry="5" transform="rotate(50 12 12)"/><ellipse cx="12" cy="12" rx="9.500" ry="6" transform="rotate(-25 12 12)"/></g>',
  blank: '<path d="M4 1h11l5 5v17H4z" fill="#f8f8f8" stroke="#c6c6c6"/><path d="M15 1v5h5z" fill="#ddd" stroke="#c6c6c6"/>',
  fao: '<circle cx="12" cy="12" r="11" fill="#fff" stroke="#111" stroke-width="1.600"/><circle cx="12" cy="12" r="8.500" fill="none" stroke="#333" stroke-dasharray="2 1"/><text x="12" y="9" font-size="7" text-anchor="middle" font-weight="700" font-family="Liberation Sans,sans-serif" fill="#000">A</text><path d="M12 8v13M9 12l3 3 4-3M9 10l3 3 3-3M10 17l2 2 2-2" stroke="#111" stroke-width="1.500" fill="none"/><path d="M4 0C-2 9 2 11 5 9.500S7 5 4 0z" fill="#1010f0"/>',
  explorer: '<path d="M1 3h7l2 2h12v16H1z" fill="#e8ae28"/><path d="M1 7h22v13H1z" fill="#fcd668"/><path d="M5 22v-9h14v9h-4v-5H9v5z" fill="#3b8ddb"/>',
  chrome, globe: '<circle cx="12" cy="12" r="11.500" fill="#7d9cc9" stroke="#5d7aa8"/><path d="M4 4q7-5 12 0l-3 5-5 1-3 5-4-4zM12 13l6-2 4 4-3 6-5-1zM19 5l3 4-3-1z" fill="#e4ebf4"/>',
  zoomapp: '<rect x=".5" y=".5" width="23" height="23" rx="6" fill="#3f8cf8"/><rect x="4" y="8" width="11" height="8.500" rx="2" fill="#fff"/><path d="M16 11l4-3v8.500l-4-3z" fill="#fff"/>',
  canva: '<defs><linearGradient id="g" x1="0" y1="0" x2="1" y2="1"><stop offset="0" stop-color="#18c6d4"/><stop offset=".5" stop-color="#2b86dc"/><stop offset="1" stop-color="#7a2ae8"/></linearGradient></defs><circle cx="12" cy="12" r="11.800" fill="url(#g)"/><text x="12" y="18" font-size="19" font-style="italic" text-anchor="middle" font-family="Liberation Serif,serif" fill="#fff" stroke="#fff" stroke-width=".5">C</text>',
  photo: '<rect x="1" y=".5" width="22" height="23" fill="#e8e0cc" stroke="#a09880"/><rect x="3" y="4" width="18" height="13" fill="#1c78b8"/><path d="M3 11q5-3 9 0t9-1v7H3z" fill="#e8b23c"/><path d="M3 12l4-2 5 4 4-4 5 2v5H3z" fill="#2f5c3c" opacity=".6"/>',
  cloud: '<path d="M5 18a5 5 0 0 1 1-9 7 7 0 0 1 12 1 4.500 4.500 0 0 1 1 8z" fill="#dce8f8"/><path d="M7 9a5.500 5.500 0 0 1 10 0q-3 2-4 5-4-4-6-5z" fill="#9bbcec"/><path d="M2 17.500a4 4 0 0 1 4-6q4 0 7 3 4-4 8-1 3 3-1 4.500z" fill="#f0f5fc"/>',
  caret: '<path d="M5 15.500l7-7 7 7" stroke="#111" stroke-width="1.700" fill="none"/>',
  cam: '<path d="M4 7.500h11v10H4zM15 10.500l4-2v8l-4-2M6 4.500q5-4 11 0M6 20.500q5 4 11 0" fill="none" stroke="#111" stroke-width="1.600"/>',
  battery: '<rect x="7" y="8" width="15" height="10" fill="none" stroke="#111" stroke-width="1.600"/><path d="M9.500 10.500h8v5h-8z" fill="#111"/><path d="M23 11v4M1 6h6v4H1zM2 3v3M6 3v3M4 10v5h4" stroke="#111" stroke-width="1.500" fill="none"/>',
  sound: '<path d="M1 9h4l5-5v16l-5-5H1z" fill="none" stroke="#111" stroke-width="1.500"/><path d="M13 9q2 3 0 6M16 6.500q4 5.500 0 11" stroke="#111" stroke-width="1.500" fill="none"/><path d="M19 4q6 8 0 16" stroke="#999" stroke-width="1.500" fill="none"/>',
  notify: '<path d="M1 2h22v15h-9l-4 4v-4H1z" fill="#000"/><path d="M5 6h14M5 9.500h14M5 13h10" stroke="#d8e8ef" stroke-width="1.500"/>'
};
icons.split2 = icons.split;
define('q-icon', ':host{display:block;flex:none;width:24px;height:24px}:host([off]){opacity:.42;filter:grayscale(.75)}svg{display:block;width:100%;height:100%;overflow:visible}',
  el => `<svg viewBox="0 0 24 24" fill="none">${icons[el.getAttribute('name')]}</svg>`,
  el => { const s = el.getAttribute('size'); if (s) el.style.width = el.style.height = s + 'px'; });

define('drop-arrow', ':host{display:block;flex:none;width:7px;height:4px}i{display:block;border:3.500px solid transparent;border-top:4px solid #4a4a4a;border-bottom:0}:host([off]) i{border-top-color:#aaa}', '<i></i>');
define('grip-dots', ':host{display:block;flex:none;width:5px;height:17px;background:radial-gradient(circle at 1px 1px,#bbb .5px,transparent .9px) 0 0/3px 3px}', '');
define('tool-sep', ':host{display:block;flex:none;width:1px;height:19px;background:#c4c4c4}', '');
define('pressed-tool', ':host{display:flex;flex:none;height:31px;width:32px;align-items:center;justify-content:center;background:#d9d9d9;border:1px solid #a4a4a4;border-radius:2px}', '<slot></slot>');
define('spin-box', ':host{display:flex;flex:none;width:71px;height:20px;border:1px solid #9e9e9e;border-radius:3px;background:#f0f0f0;color:#6b6477;align-items:center}b{font-weight:400;padding:2px 0 0 4px;flex:1}div{width:14px;border-left:1px solid #b4b4b4;height:18px;display:flex;flex-direction:column;align-items:center;justify-content:center;gap:3px}i{border:3.500px solid transparent;border-bottom:4px solid #888;border-top:0}i+i{border-top:4px solid #888;border-bottom:0}',
  '<b><fit-text w="28">0,000</fit-text></b><div><i></i><i></i></div>');

/* ---------- toolbars: each item is [kind, centre] or [kind, centre, 1] when disabled ---------- */
const G = 'grip', A = 'arrow', S = 'sep';
const off = list => list.map(([n, x]) => [n, x, 1]);
const bars = {
  file: [[G,7],['new',29],['open',61.5],['save',95],['layout',128],['layoutmgr',161],['style',194],[G,221],['hand',243],['pan',276],['zoomin',309],['zoomout',342],['zoomfull',375],['zoomsel',408],['zoomlayer',441],['zoomnative',474,1],['zoomlast',507],['zoomnext',540,1],['newmap',574],['map3d',607],['bmnew',640],['bm',672],['clock',705],['refresh',738],[G,765],['identify',787],['abacus',820],['gear',853],['sigma',886],['table',919],[A,941],['measure',964],[A,986],['tip',1009],['action',1042,1],[A,1064,1]],
  data: [[G,7],['source',29],['geopkg',62],['shp',95],['feather',128],['chip',161],['mesh',194],[S,215],['virtual',234],[S,255],[G,268],['pencils',291,1],['pencil',322],['saveedit',355,1],['addfeat',389,1],['vertex',422,1],[A,444,1],['form',467,1],['trash',500,1],['cut',533,1],['copy',565,1],['paste',599,1],['undo',632,1],['redo',665,1],[G,692],['label',713],['chart',747],[S,768],['labelpin',786],['labelred',819],[S,841],['gl1',860,1],['gl2',893,1],['gl3',926,1],['gl4',959,1],['gl5',992,1],[G,1019],[G,1036],['python',1058],[G,1085],['help',1107],[G,1134],['*topo',1156]],
  digit: [[G,7],...off([['tri',29],['curve',62],[A,84],['bMove',107],[A,129],['bRotate',152],['bScale',185],['bSimplify',218],['bRing',251],['bPart',284],['bFill',317],['bDelRing',350],['bDelPart',383],['bReshape',416],['bOffset',449],['vRot',482],['cross',515],['split',548],['split2',581],['merge',614],['lines',647],['triangles',680],[A,702]]),[G,718],...off([['h1',741],['h2',774],['h3',807],['h4',840],['sunUp',873],['sunDn',906],['conUp',940],['conDn',973],['gamUp',1008],['gamDn',1041]]),[G,1311],['magnet',1333],['more',1357]],
  select: [[G,7],...off([['arc',30],[A,51],['circle',74],[A,96],['ellipse',119],[A,141],['rect',165],[A,186],['polygon',209],[A,231]]),[G,247],['*select',270],['*arrow',292],['selform',316],[A,337],['deselect',361],[A,382],['selloc',405],[G,432],...off([['m1',454],['m2',487],[A,509],['m3',532],['m4',565],[A,587]]),[G,604],['AD',626],['MO',659],['RO',692],['spin',744.5],['SC',797],['ADJ',830],['P2',863],['Tm',896],['Tp',929],['ex',962],['back',995],[G,1022],['annot',1045],[A,1066],['annsel',1088],['annpoly',1122],['annline',1155],['annstar',1189],['anntext',1223],[S,1241],['annballoon',1261],[A,1283],[G,1300],['rho',1323],['more',1357]]
};
define('tool-bar', ':host{display:flex;align-items:center;height:39px;background:linear-gradient(#fcfcfc,#efefef);border-bottom:1px solid #b8b8b8;overflow:hidden}', el => {
  let edge = 0;
  return bars[el.getAttribute('set')].map(([kind, cx, dim]) => {
    const width = {grip: 5, arrow: 7, sep: 1, spin: 71, '*arrow': 11, '*topo': 32, '*select': 32}[kind] || 24;
    const gap = cx - width / 2 - edge;
    edge = cx + width / 2;
    const attrs = `style="margin-left:${gap}px"${dim ? ' off' : ''}`;
    if (kind === G) return `<grip-dots ${attrs}></grip-dots>`;
    if (kind === S) return `<tool-sep ${attrs}></tool-sep>`;
    if (kind === A) return `<drop-arrow ${attrs}></drop-arrow>`;
    if (kind === 'spin') return `<spin-box ${attrs}></spin-box>`;
    if (kind === '*arrow') return `<pressed-tool style="margin-left:${gap}px;width:11px"><drop-arrow></drop-arrow></pressed-tool>`;
    if (kind[0] === '*') return `<pressed-tool ${attrs}><q-icon name="${kind.slice(1)}"></q-icon></pressed-tool>`;
    return `<q-icon name="${kind}" ${attrs}></q-icon>`;
  }).join('');
});

/* ---------- title and menu ---------- */
define('title-bar', ':host{display:flex;height:23px;background:#fff;align-items:center;padding-left:2px}q-icon{margin-right:5px}nav{margin-left:auto;display:flex;gap:30px;padding:0 17px 3px 0}svg{width:16px;height:16px;fill:none;stroke:#000;stroke-width:1.100}',
  '<q-icon name="qgis" size="16"></q-icon><fit-text w="131">*Untitled Project — QGIS</fit-text><nav><svg viewBox="0 0 16 16"><path d="M3 8.500h10"/></svg><svg viewBox="0 0 16 16"><path d="M3.500 5.500h7v7h-7zM5.500 5.500v-2h7v7h-2"/></svg><svg viewBox="0 0 16 16"><path d="M3 3.500l10 10M13 3.500l-10 10"/></svg></nav>');
define('menu-bar', ':host{display:flex;height:20px;padding:1px 0 0 10px;gap:14px;align-items:center;border-bottom:1px solid #d5d5d5;background:#f0f0f0}u{text-underline-offset:2px}',
  [['Pro<u>j</u>ect',37],['<u>E</u>dit',20],['<u>V</u>iew',25],['<u>L</u>ayer',28],['<u>S</u>ettings',42],['<u>P</u>lugins',39],['Vect<u>o</u>r',33],['<u>R</u>aster',32],['<u>D</u>atabase',48],['<u>M</u>esh',29],['Pro<u>c</u>essing',57],['<u>H</u>elp',25]].map(([t, w]) => `<fit-text w="${w}">${t}</fit-text>`).join(''));

/* ---------- dock pieces ---------- */
define('dock-title', ':host{display:flex;align-items:center;height:22px;padding:0 2px 2px 4px}nav{margin-left:auto;display:flex;gap:3px}svg{width:11px;height:11px;fill:none;stroke:#444}',
  '<slot></slot><nav><svg viewBox="0 0 11 11"><rect x=".5" y=".5" width="10" height="10" rx="2"/><path d="M2.500 5h3.500v3.500H2.500zM4.500 5V3H8.500v4H6"/></svg><svg viewBox="0 0 11 11"><rect x=".5" y=".5" width="10" height="10" rx="2"/><path d="M3 3l5 5M8 3L3 8" stroke-width="2"/></svg></nav>');
define('scroll-bar', ':host{display:flex;flex-direction:column;width:14px;flex:none;background:#e4e4e4;border-left:1px solid #b8b8b8}div{height:14px;background:#f8f8f8;display:grid;place-items:center;flex:none}i{border:3.500px solid transparent;border-bottom:4px solid #555;border-top:0}.dn{margin-top:auto}.dn i{border-bottom:0;border-top:4px solid #555}b{background:#f9f9f9;border:solid #b8b8b8;border-width:1px 0;flex:none}',
  el => `<div><i></i></div><b style="height:${el.getAttribute('thumb')}px"></b>${el.hasAttribute('down') ? '<div class="dn"><i></i></div>' : ''}`);
define('tree-row', ':host{display:flex;align-items:center;height:18px;flex:none}svg{width:9px;height:9px;margin:0 7px 0 4px;fill:#555;flex:none}q-icon{margin-right:6px}', el => {
  const a = el.getAttribute('arrow');
  return `<svg viewBox="0 0 9 9" style="margin-left:${3 + 16 * (el.getAttribute('level') || 0)}px">${a === 'open' ? '<path d="M0 2h9L4.500 6.500z"/>' : a === 'none' ? '' : '<path d="M3 .5v8L7 4.500z"/>'}</svg><q-icon name="${el.getAttribute('icon')}" size="15"></q-icon><slot></slot>`;
});
define('browser-dock', ':host{display:flex;flex-direction:column;width:306px;flex:none}.tools{display:flex;height:29px;align-items:center;padding:0 0 3px 8px;gap:9px}.box{flex:1;display:flex;border:1px solid #b4b4b4;background:#fff;min-height:0}.tree{flex:1;overflow:hidden;display:flex;flex-direction:column}',
  `<dock-title><fit-text w="42">Browser</fit-text></dock-title>
  <div class="tools"><q-icon size="16" name="addlayer"></q-icon><q-icon size="16" name="refresh"></q-icon><q-icon size="16" name="funnel"></q-icon><q-icon size="16" name="collapse"></q-icon><q-icon size="16" name="info"></q-icon></div>
  <div class="box"><div class="tree">` +
  [['favorite','Favorites',47,0,'none'],['bmtree','Spatial Bookmarks',97],['home','Home',33],['folder','C:\\ (OS)',42],['folder','D:\\ (DATA)',55],['folderopen','E:\\ (DATA)',53,0,'open'],['folder','Arcgis',33,1],['folder','Badan Pusat Statistik',109,1],['folder','bahan bps',55,1],['folder','baru',24,1],['folder','Bismillah beda',72,1]]
    .map(([i, t, w, l = 0, a = '']) => `<tree-row icon="${i}" level="${l}" arrow="${a}"><fit-text w="${w}">${t}</fit-text></tree-row>`).join('') +
  '</div><scroll-bar thumb="129"></scroll-bar></div>');

define('check-box', ':host{display:block;flex:none;width:14px;height:14px;background:#fff;border:1px solid #b0b0b0}svg{display:block;width:12px;height:12px}', '<svg viewBox="0 0 12 12"><path d="M2.500 5.500L5 9.500 9.800 1.800" fill="none" stroke="#000" stroke-width="2"/></svg>');
define('layers-window', ':host{position:absolute;left:11px;top:436px;width:189px;height:300px;background:#fff;box-shadow:1px 2px 7px rgba(0,0,0,.5);display:flex;flex-direction:column}header{height:30px;display:flex;justify-content:space-between;align-items:center;padding:0 1px 0 8px;color:#999}header span{width:19px;height:19px;background:#e2e2e2;color:#fff;text-align:center;line-height:17px;font-size:10px;margin-top:3px}.tools{background:#f0f0f0;height:31px;display:flex;align-items:center;padding:0 0 1px 8px;gap:9.500px}.box{flex:1;border:1px solid #b4b4b4;border-bottom:0}.row{height:18px;background:#f0f0f0;display:flex;align-items:center;padding-left:23px;font-weight:700}.sw{width:16px;height:16px;background:#6a7bc1;border:1px solid #35508e;margin:0 6px}u{text-underline-offset:2px}',
  '<header><fit-text w="33">Layers</fit-text><span>x</span></header><div class="tools"><q-icon size="16" name="brush"></q-icon><q-icon size="16" name="group"></q-icon><q-icon size="16" name="eye"></q-icon><q-icon size="16" name="funnel2"></q-icon><q-icon size="16" name="eps"></q-icon><drop-arrow style="margin-left:-5px"></drop-arrow><q-icon size="16" name="expand" style="margin-left:-2px"></q-icon><q-icon size="24" name="more" style="margin-left:-3px"></q-icon></div><div class="box"><div class="row"><check-box></check-box><span class="sw"></span><fit-text w="83"><u>finalpetasls050</u></fit-text></div></div>');

/* ---------- topology checker ---------- */
define('error-table', ':host{display:flex;height:70px;border:1px solid #b4b4b4;background:#fff}.grid{flex:1;overflow:hidden;display:grid;grid-template-columns:11px 51px 84px 1fr;grid-auto-rows:20px;grid-template-rows:18.500px}.grid>*{border:solid #b8b8b8;border-width:0 1px 1px 0;line-height:16px;padding-left:3px}.grid>.h{background:linear-gradient(#fdfdfd,#ececec);font-weight:700;display:flex;justify-content:center;padding:2px 0 0}.grid>.n{background:#f7f7f7;padding:2px 0 0 2px}.r{text-align:right;padding-right:3px}.s{background:#0078d7;color:#fff}b{font-weight:700}',
  '<div class="grid"><div class="h"></div><div class="h"><fit-text w="28">Error</fit-text></div><div class="h"><fit-text w="30">Layer</fit-text></div><div class="h"><fit-text w="59">Feature ID</fit-text></div>' +
  [['0', 31, ''], ['<b>1</b>', 31, 's'], ['2', 94, '']].map(([n, f, c]) => `<div class="n">${n}</div><div class="${c}"><fit-text w="44">overlaps</fit-text></div><div class="${c}" style="padding-left:2px"><fit-text w="78">finalpetasls050</fit-text></div><div class="r ${c}"><fit-text w="13">${f}</fit-text></div>`).join('') +
  '</div><scroll-bar thumb="28" down></scroll-bar>');
define('checker-dock', ':host{display:block;height:183px}.tools{display:flex;height:36px;align-items:flex-start;padding:5px 0 0 8px;gap:9px}.status{display:flex;align-items:center;height:26px;padding-top:5px;gap:4px}.mid{margin-left:449px}.tabs{display:flex;height:22px;border-top:1px solid #b4b4b4}.tabs div{display:flex;align-items:center;justify-content:center;background:#dcdcdc;border:1px solid #b0b0b0;border-top:0;border-radius:0 0 3px 3px;width:116px;height:21px;padding-right:3px}.tabs div:first-child{background:#f6f6f6;width:139px;height:23px;margin-top:-1px}.split{width:18px;height:2px;margin:3px auto;background:radial-gradient(circle at 1px 1px,#aaa .5px,transparent .9px) 0 0/3px 2px}',
  '<dock-title><fit-text w="126">Topology Checker Panel</fit-text></dock-title><div class="tools"><q-icon size="16" name="check"></q-icon><q-icon size="16" name="checksel"></q-icon><q-icon size="16" name="wrench"></q-icon></div><error-table style="margin-top:-1px"></error-table><div class="status"><check-box></check-box><fit-text w="59">Show errors</fit-text><fit-text class="mid" w="96">4 errors were found</fit-text></div><div class="tabs"><div><fit-text w="116">Topology Checker Panel</fit-text></div><div><fit-text w="93">Processing Toolbox</fit-text></div></div><div class="split"></div>');
define('message-bar', ':host{display:flex;align-items:center;height:30px;background:#dff0d8;border:1px solid #92a08d;padding:0 11px 0 9px;font-size:11.500px}a{color:#1d8c12;text-decoration:underline;text-underline-offset:2px}.end{margin-left:auto;display:flex;align-items:center}',
  '<q-icon name="ok"></q-icon><fit-text w="89" style="margin-left:10px"><b>Layer Exported:</b></fit-text><fit-text w="164" style="margin-left:2px">Successfully saved vector layer to</fit-text><fit-text w="230" style="margin-left:3px"><a>G:\\Final Peta SLS 150\\Peta Digital SLS 150.gpkg</a></fit-text><div class="end"><fit-text w="32"><i>1 more</i></fit-text><q-icon name="close" size="18" style="margin:-2px 4px 0 19px"></q-icon><drop-arrow></drop-arrow></div>');

/* ---------- map canvas ---------- */
const frames = {W: [420, 405], M: [700, 405], E: [980, 560]};
let seed = 7;
const noise = () => (seed = (seed * 16807) % 2147483647) / 2147483647 - .5;
const points = (frame, list) => list.trim().split(/\s+/).map(p => p.split(',').map(Number)).map(([x, y]) => [frames[frame][0] + x / 3, frames[frame][1] + y / 3]);
const rough = (pts, amp) => {
  const out = [pts[0]];
  for (let i = 1; i < pts.length; i++) {
    const [a, b] = [pts[i - 1], pts[i]], n = Math.floor(Math.hypot(b[0] - a[0], b[1] - a[1]) / 3);
    for (let k = 1; k < n; k++) out.push([a[0] + (b[0] - a[0]) * k / n + noise() * amp, a[1] + (b[1] - a[1]) * k / n + noise() * amp]);
    out.push(b);
  }
  return out;
};
const path = (pts, amp = .9) => 'M' + rough(pts, amp).map(p => p.map(v => v.toFixed(1)).join(' ')).join('L');
const outline = [
  ...points('W', '52,366 68,322 90,300 98,258 112,238 135,255 150,265 185,268 217,278 245,262 262,240 275,212 286,204 278,186 282,155 292,130 305,112 325,80 360,52 395,40 420,25 436,8 640,8 658,25 665,36 692,38 705,50 745,52 765,55 780,70 798,75 812,95 828,103 845,120'),
  ...points('M', '45,125 53,112 65,105 82,85 105,88 118,84 132,90 150,85 185,86 188,100 205,118 225,125 240,140 245,165 258,172 262,190 272,215 290,222 310,228 330,232 350,242 375,242 400,250 430,252 450,265 462,285 480,275 497,262 512,258 520,270 545,278 560,298 572,320 580,345 605,370 640,382 665,395 690,415 715,430 730,460 750,475 765,500 785,508 815,510 830,525 832,545 850,560 872,580 880,597 915,605 945,612 960,630 990,642'),
  ...points('E', '165,185 185,193 205,193 235,186 285,178 295,182 318,170 322,155 350,135 368,110 380,85 382,75 405,63 450,60 468,50 495,53 512,62 528,75 550,68 572,98 580,125 605,145 635,178 650,212 663,248 700,262 740,277 781,292 740,315 715,340 690,362 640,385 605,412 575,430 555,455 510,480 450,508 374,508 345,475 310,440 295,412 280,378 240,345 215,325 185,305 168,300 145,310 100,335 50,368'),
  ...points('M', '840,838 800,836 763,827 735,842 700,857 665,880 648,893 658,912 655,935 635,955 600,962 545,968 535,980 430,980 425,968 370,955 325,935 312,933 305,943 270,942 240,933 205,925 185,895 178,870 182,800 172,790 160,765 152,743'),
  ...points('W', '945,733 900,726 845,720 815,695 805,670 790,655 730,642 680,650 620,655 590,660 545,655 520,635 505,612 485,600 475,585 484,555 470,520 482,495 485,475 520,482 526,465 508,460 500,430 490,425 478,425 445,438 432,430 400,455 385,475 350,478 295,472 270,482 257,483 272,455 255,440 222,455 212,470 200,470 187,455 205,440 212,425 172,425 178,400 155,380 110,362 90,362 60,368 52,366')
];
const lines = {
W: `305,112 350,117 400,118 440,122 505,124 540,128 560,138 600,143 640,150 685,138
345,130 360,118 410,120 425,130 480,135 510,160 528,175 522,200 525,225 490,262 495,285 515,298
345,130 355,148 378,165 405,200 408,240 418,262
278,186 300,210 325,240 322,270 330,290 345,302 350,350 380,375 410,385 455,395 475,425
325,240 330,222 350,215 372,232 345,250 325,240
112,238 128,265 118,312 132,330 95,358
135,255 140,290 160,297 165,275 210,278
100,258 106,262 88,320 66,362
70,320 88,322 118,330
66,330 60,362
76,322 70,362
90,300 118,312
217,278 200,345 182,400
205,285 190,330 170,330 172,310 150,320 148,302 165,297 200,300
180,300 182,330
155,362 178,368
385,165 400,182 418,185 410,195 425,212 400,200 385,185 385,165
390,80 410,70 425,75 418,88 402,92 395,104 390,80
470,60 485,55 500,75 500,92 478,85 470,60
498,17 500,124
455,17 475,40 500,50 525,45 530,17
480,20 515,30
485,40 520,38
505,60 535,65 545,90 510,105 500,92
510,85 560,95 600,105 650,122 655,90 645,80 600,70 560,55 530,55
545,95 590,100 590,112 545,108
570,30 600,45 590,62 565,50 570,30
590,30 632,38 620,55 600,65 598,40
600,45 625,48
520,17 535,30 560,17
600,17 605,35
692,38 692,110 690,140 712,165 735,200 745,210
690,140 660,135 660,165 625,178 615,190 560,200 540,210 525,198 560,162 640,165
638,125 640,150 645,165 700,175 738,205
675,145 690,165 720,195 735,210
520,200 540,195 535,210
798,75 765,100 745,100 725,118 725,140 700,160
725,118 745,102 775,95
427,138 445,140 448,155 430,150 427,138
450,155 470,165 500,155 525,165 520,185 495,172 460,175 450,155
500,142 525,148 515,162 498,150
685,180 705,190 700,210 683,210 685,180
683,212 740,212 800,230 850,222 890,240 905,248 990,245
735,215 745,250 730,262 745,275 775,265 770,290 755,292 750,250
740,225 765,225 770,240 750,250
775,165 800,155 820,138 855,155 842,170 820,180 792,175 768,185 780,165
800,155 812,172
785,160 795,175
805,145 830,158
780,185 790,210 765,205 745,210
800,215 830,218 848,205 835,185 822,180
830,145 822,165 845,165
855,212 880,222 900,205 925,210 930,235 960,238 962,210 985,208
855,170 850,210 890,235 900,245
610,232 635,235 632,250 615,255 610,232
635,235 665,220 690,220 698,240 695,290 690,320 672,342 640,335 615,320 600,300
610,255 605,285 585,290 600,305 632,300 668,285 665,300 640,298 630,280 610,290
570,290 590,300 620,305
640,232 652,245 665,222
700,270 722,262 745,262 740,275 700,275 710,300 705,335 730,320 715,280
700,235 702,270 702,345 715,355 720,325
735,355 755,360 780,340 780,325 750,335 738,355
720,322 770,325 820,310 825,320 780,327
830,318 850,282 862,262 892,265 882,322 830,318
905,255 898,330 898,440 880,450
905,255 935,252 990,250
782,345 810,355 830,380 860,385 870,400 890,405 895,440
792,380 810,380 812,397 792,398 792,380
845,400 868,390 862,425 840,420 845,400
870,405 890,420 895,440 868,432 870,405
918,360 935,350 965,345 945,360 935,375 918,372 918,360
435,280 515,300 580,305 615,325 640,345 660,370 652,400
422,272 490,275 490,283 430,280
420,285 450,292 510,295
490,255 510,262 508,295
445,300 490,305 490,318 450,315 445,300
460,335 480,335 480,360 458,350 460,335
460,345 485,345
485,352 535,355 545,335 575,320 572,338 550,345 535,362 485,358
412,385 455,360 485,355
355,308 385,310 370,328 355,322 355,308
400,342 420,340 415,360 395,375 400,342
622,348 642,345 648,365 622,348
240,325 248,308 285,315 315,320 325,345 345,355
285,298 318,310 310,340 290,322 285,298
240,328 290,335 330,355 345,375
275,365 290,362 310,370 325,360 345,375 342,395 325,405 305,410 285,410 280,392 268,385 275,365
290,362 285,385 290,410
305,368 300,390 308,410
320,362 318,385 322,404
335,366 330,400
270,378 300,375 345,385
280,392 310,388 340,393
282,402 335,400
370,240 392,242 385,260 370,262
395,240 415,238 420,255 402,262 390,252 395,240
388,255 410,272 425,278
370,262 385,270 380,285 368,278
395,262 400,275
345,370 380,375 380,418 350,400
275,420 298,425 290,445 270,445 275,420
290,450 285,470
490,425 495,395 520,382 560,378 600,392 650,400 700,420 760,432 800,420 830,440 860,465 882,490 887,532 850,520 838,500 830,465 800,433 735,470 710,515 705,560
560,378 590,400 610,415 620,440 620,475 570,500
500,430 525,445 530,480
585,415 610,420 615,445 595,440 585,415
570,395 590,405 578,410
610,430 640,428 680,450 680,470 712,475 715,498 690,505 680,485 660,465 640,460
635,432 633,475
640,440 670,442 685,435
680,455 700,460 700,475
718,458 735,455 730,480 718,485 718,458
718,470 733,468
528,482 570,500 578,515 568,530 550,525 535,500 515,495
540,500 538,525
560,505 555,530
545,498 550,528
620,475 632,515 608,520 625,545 648,540 638,570 690,588 740,580 770,550 785,580
615,525 645,525
610,530 650,540
688,545 700,535 718,570 705,580 682,572 688,545
695,560 712,562
770,515 785,520 780,545 752,540 755,525 770,515
640,575 665,595 690,590
632,605 660,605 658,632 632,632 632,605
600,655 610,635 655,632 655,652
628,636 630,655
515,610 530,608 560,630 560,650
530,608 540,640
735,640 735,620 750,590 780,590 800,580 850,590 845,625 855,660 845,690 815,695
750,590 760,620 740,620
760,570 765,600 780,615
740,605 770,610
760,595 790,600 785,620 760,618
765,650 770,620
785,655 800,620 830,590 848,585
812,558 845,555 845,570 812,575 812,558
820,575 835,590 845,570
828,555 828,590
845,585 887,535 900,515 930,525
862,580 870,560 848,555
895,445 930,460 990,430
905,480 930,482 990,495
905,480 895,515 925,520 955,500 985,498
850,720 870,695 915,688 955,695 970,715 990,725
838,690 855,675 880,682 860,710
835,690 860,695
850,680 835,715
815,690 850,655
172,425 188,400 205,330
670,590 665,610 690,610 685,592
680,590 740,580`,
M: `68,255 60,300 58,440
68,255 100,250 140,248 180,258 215,270 240,290 270,310 300,330 340,345 370,370
0,225 50,245 130,240 185,250 220,265
0,240 50,210 72,205 90,222 90,240
90,222 118,225 118,240
90,235 120,225 130,205 148,208 145,240
120,208 135,235
130,210 148,225
150,225 170,240 195,230 220,210
178,88 178,115 152,125 165,132 188,130 240,182 225,195 198,182 200,230
155,125 170,108 175,125 188,112
188,130 218,165
200,200 222,200 220,225 200,225
200,190 222,190
200,212 222,212
222,180 240,182 225,205 255,225 275,230 285,240 278,255 262,250 245,225 220,230
178,245 190,260 200,255 208,232
165,275 200,260 200,290 165,300 165,275
170,290 190,285 188,318 165,315 170,290
168,275 198,278
188,268 200,285 185,295
195,260 230,265 240,290 220,310 215,285
240,265 240,300
250,280 272,275 270,300 245,300 250,280
240,290 258,285 268,325 245,315 240,290
285,305 330,280 335,295 300,310 290,325
330,270 345,262 380,282 375,268 408,295 385,300 350,280 330,270
375,285 385,310 410,300 400,320 380,325
290,320 330,325 370,345 360,350 320,335
300,325 345,340 372,360
190,320 235,330 270,345 275,355 258,378 235,375 240,362 270,355
190,320 165,350 160,375 170,385 145,430 110,455
78,355 128,340 130,348 100,368 80,375 78,355
122,378 165,378 165,405 122,405 122,378
132,380 135,412 158,410 158,380
132,390 158,390
122,405 105,430 60,440 100,445 145,420
65,450 100,430 125,412
60,440 75,458 125,460 115,470
170,430 185,418 200,440 200,465 212,458 235,465 240,430 255,400 258,378
165,460 178,430 168,470 140,500 118,505
60,485 115,490 118,505 85,515
115,488 138,488 138,502 118,503
126,488 126,503
235,475 262,498 255,530 235,560 238,575 205,598 195,605
270,350 300,350 298,338 350,350 370,368 395,350 422,365 420,400 440,425 445,460
340,342 355,365 370,370
370,345 390,320 415,305 465,290 510,285 555,290
475,290 500,262 520,275
420,400 470,390 510,365 580,350
420,405 445,412 510,405 512,390 530,385 575,410 572,490 560,500
440,425 460,412 510,412
475,425 500,412 515,440 490,448 475,425
545,410 575,410 570,435 545,428 545,410
548,420 575,420
515,445 535,455 570,460
500,455 498,470 515,490 535,490 540,450
515,450 530,488
510,475 525,455
530,475 565,480
540,490 568,490
285,400 305,390 348,400 335,415 332,440 305,442 285,425 285,400
298,400 302,440
365,460 385,450 398,470 380,485 365,460
385,485 410,470 445,462 455,490 430,525 410,540 385,485
445,462 443,530 425,530
455,490 500,495 540,515 565,540 590,560 620,575
455,490 460,530
410,535 480,530 490,500 510,510 550,518 545,545 560,550 560,590 430,595 435,550 480,545 490,570 560,565
490,500 545,505 570,545
412,540 440,548 470,548 470,590
435,580 470,580
480,500 485,530 520,530 520,515
490,590 495,575 530,560 560,588
520,535 555,555
530,545 540,568
385,558 410,540
385,558 430,595 460,610 470,640 510,628 560,622 565,590 600,595
300,595 305,555 360,535 375,560 410,540
195,600 215,595 248,618 258,638 215,635 195,620 195,600
200,602 230,615 255,625
195,600 260,638 280,625 275,640 272,662 335,668 333,600 280,598 280,625
300,595 298,662
315,600 312,635
272,662 265,690 225,700
85,520 100,555 120,590 125,610 145,635 165,670 200,680 225,700 235,710 270,745 310,740 340,722 375,710 420,725 470,745 500,742 530,725 575,720 580,700 610,690 650,690
0,600 10,650 0,690
45,525 60,515 90,525
52,630 92,630 105,660 95,685 78,665 52,660 52,630
60,630 62,660
82,632 84,662
60,648 85,650
95,645 105,655
75,665 76,688
0,690 20,680 60,690 120,690 150,725
150,740 200,755 235,780 250,815 280,845 310,870
120,690 145,710 150,740
310,740 335,765 345,790 370,800 400,830 430,850 460,860 470,880 540,893 620,888 648,893
405,800 412,770 450,770 500,775 520,785 562,808 525,820 480,815 450,820 405,800
405,800 450,790 510,795 525,820
450,790 440,815
450,785 480,820 515,790
415,770 430,800
510,775 520,820
295,890 310,850 330,850 355,875 385,870 425,910 425,960
295,890 350,910 372,870
310,850 330,905
300,880 360,890
320,865 370,880
345,870 345,905 380,930
370,935 400,920 425,945 390,950 370,935
385,945 385,965
400,925 410,965
372,930 395,965
620,480 640,470 655,490 680,505 668,470 690,475 710,510 720,535 725,555
620,480 650,520 655,545 690,550 710,560
650,520 680,510 705,530 680,525 680,548
695,525 695,550
710,530 720,560
720,540 760,550 780,565 825,560 860,575 870,600 920,620 990,642
720,555 750,580 790,585 830,595 855,630 880,645 940,655
780,580 800,560
830,595 840,580 865,605 855,630
870,605 860,635
945,655 960,648 990,650
945,655 958,690 985,688
560,590 575,540 600,535 620,545 620,580 590,580 570,550
580,550 585,590
600,580 600,600
560,595 580,620 610,645 640,655
575,550 590,595 600,620
595,560 600,600 630,650
620,580 655,570 670,590 680,625 655,640 625,635 600,600
685,630 710,615 745,610 745,645 700,645 685,630
610,600 640,650 660,660 710,655 740,660
640,650 690,660 740,648
650,680 690,670 740,665 745,700 700,700 650,680
720,670 725,700
745,612 830,610 860,640 885,655
745,680 790,685 770,710 785,745 820,765 850,780 880,775 920,742 990,738
610,690 620,735 630,765 660,780 720,788 770,785 785,750 735,710 690,705 650,695 615,700
625,765 630,745 655,720 690,715 740,710 780,750 725,768 625,765
655,720 690,740 630,750
690,715 700,740 725,768
630,755 680,750 690,765
640,740 665,755
670,730 760,740
720,712 725,765
740,730 745,755 760,745`,
E: `0,320 10,315 30,318 80,278 150,275 180,282 210,266 250,268 290,263 340,267 380,285 430,297 490,298 510,308 540,312 600,300 635,290 690,298 740,295 781,292
20,145 60,153 115,167 158,185
0,120 20,140 15,165
0,160 15,175 45,185 100,190
25,145 15,170
105,185 120,182 158,190 155,218 122,230 108,215 112,205 102,200 105,185`
};
const canvas = `<svg viewBox="313 411 1052 317"><path d="${path(outline, 1.2)}Z" fill="#9a7db6" stroke="#2a2530" stroke-width="1.050"/><path d="${Object.entries(lines).map(([f, block]) => block.split('\n').map(l => path(points(f, l), .7)).join('')).join('')}" fill="none" stroke="#2a2530" stroke-width="1.050" stroke-linejoin="round"/></svg>`;
define('map-canvas', ':host{display:block;height:317px;background:#fff;border:solid #b0b0b0;border-width:0 1px;overflow:hidden}svg{display:block;width:1052px;height:317px}', canvas);

/* ---------- taskbar ---------- */
define('search-art', ':host{display:block;width:78px;height:38px;flex:none}svg{display:block}',
  `<svg width="78" height="38" viewBox="0 0 78 38"><defs><linearGradient id="w"><stop offset="0" stop-color="#55d0d8"/><stop offset="1" stop-color="#0c68d8"/></linearGradient></defs><path d="M4 38q8-9 25-8 20 0 49-4v12z" fill="url(#w)"/><path d="M31 20q-1-10 8-11 13-3 23 0 5 1 5 12l-2 14h-6l-1-8-9 1-1 7h-8v-11q-9 3-11-4z" fill="#a69caf" stroke="#81758e" stroke-width=".7"/><path d="M40 9q10-4 12 4 0 7-8 7-5-3-4-11z" fill="#dcc8dd"/><path d="M38 12q-9-5-10 7 0 10-6 9-3-1-3-4-3-1-3 1 0 7 8 7 6 0 9-9z" fill="#a69caf" stroke="#81758e" stroke-width=".6"/><circle cx="34" cy="16" r="1" fill="#222"/><path d="M28 25q-3 4-6 1" stroke="#fff" fill="none" stroke-width="1.500"/><path d="M20 20q0-6-2-10m0 4q-4-7-6-1m6 1q2-10 5-3m-5 3q5-6 8-1" stroke="#4da8e8" stroke-width="2" fill="none"/><path d="M4 5l4 3 4-2-2 5 2 3-4-1-3 2v-4z" fill="#e473dc"/><circle cx="65" cy="8" r="2" fill="#42c5c0"/><circle cx="16" cy="24" r="2" fill="#3cb95a"/><path d="M4 36q1-11 5-20M9 37q0-8 4-12M70 29q-1-8 3-15M2 28q3 4 4 8M66 21q2 5 5 7" stroke="#5a9c48" stroke-width="2" fill="none"/><path d="M8 14q3-2 1 5-4 4-4-1zM71 13q4-1 2 5-4 3-4 0z" fill="#f2c02c"/></svg>`);
define('task-button', ':host{display:flex;flex:none;width:48px;height:40px;align-items:center;justify-content:center;position:relative}:host([active]){background:#f0f7fa}i{position:absolute;left:4px;right:4px;bottom:0;height:2px;background:#6b63cf;display:none}:host([open]) i{display:block}:host([active]) i{left:0;right:0}',
  el => `<q-icon name="${el.getAttribute('icon')}" size="${el.getAttribute('size') || 24}"></q-icon><i></i>`);
define('task-bar', ':host{position:absolute;left:0;top:728px;width:1366px;height:40px;display:flex;background:linear-gradient(90deg,#dcebf2,#d5e5ef 40%,#d6e9f0 70%,#d5e2ea 78%,#d7e9f0);font-size:12px}.start{width:48px;display:grid;place-items:center}.search{width:344px;background:#fff;border:1px solid #ccc;display:flex;align-items:center;padding-left:11px;font-size:15px;color:#333}.search q-icon{margin-right:11px}search-art{margin-left:auto}.apps{display:flex;width:583px}.tray{display:flex;align-items:center;flex:1;position:relative}.clock{text-align:center;line-height:18px;width:58px;margin-left:9px}.last{border-right:1px solid #aab9c2;width:54px;height:40px;padding:11px 0 0 17px;position:relative;margin-right:4px}.badge{position:absolute;left:26px;top:20px;width:16px;height:16px;border:1px solid #888;border-radius:50%;background:#ddd;text-align:center;line-height:14px;font-size:12px}.chev{position:absolute;left:60px;top:-1px;width:15px}',
  `<div class="start"><q-icon name="start" size="17"></q-icon></div><div class="search"><q-icon name="search" size="17"></q-icon><fit-text w="128">Type here to search</fit-text><search-art></search-art></div>
  <div class="apps"><task-button icon="taskview" size="18"></task-button><task-button icon="net" style="margin-left:3px"></task-button><task-button icon="blank" size="24"></task-button><task-button icon="fao" style="margin-left:2px"></task-button><task-button icon="explorer" size="22" style="margin-left:1px" open></task-button><task-button icon="chrome" size="22"></task-button><task-button icon="globe"></task-button><task-button icon="qgis" active open style="width:47px"></task-button><task-button icon="zoomapp" size="23"></task-button><task-button icon="chrome" size="22" open style="margin-left:1px"></task-button><task-button icon="canva" open></task-button><task-button icon="photo" open size="23" style="margin-left:-1px"></task-button></div>
  <div class="tray"><fit-text w="43" style="margin-left:12px">Desktop</fit-text><svg class="chev" viewBox="0 0 24 24"><path d="M6 7l5 5-5 5M13 7l5 5-5 5" fill="none" stroke="#5a5aac" stroke-width="1.800"/></svg><q-icon name="cloud" style="margin-left:44px"></q-icon><fit-text w="29" style="margin-left:8px;font-size:13px">31°C</fit-text><q-icon name="caret" size="18" style="margin-left:15px"></q-icon><q-icon name="cam" size="17" style="margin-left:7px"></q-icon><q-icon name="battery" size="17" style="margin-left:7px"></q-icon><q-icon name="sound" size="17" style="margin-left:7px"></q-icon><div class="clock"><fit-text w="27">11:48</fit-text><br><fit-text w="58">12/08/2022</fit-text></div><div class="last"><q-icon name="notify" size="17"></q-icon><span class="badge">1</span></div></div>`);

/* ---------- main window ---------- */
define('qgis-window', ':host{display:block;position:relative;width:1366px;height:768px;overflow:hidden;background:#f0f0f0}.body{display:flex;height:530px}.gap{width:6px;display:flex;align-items:center;padding-left:3px}.right{flex:1;min-width:0}tool-bar:last-of-type{height:38px}',
  `<title-bar></title-bar><menu-bar></menu-bar><tool-bar set="file"></tool-bar><tool-bar set="data"></tool-bar><tool-bar set="digit"></tool-bar><tool-bar set="select"></tool-bar>
  <div class="body"><browser-dock></browser-dock><div class="gap"><grip-dots style="width:2px"></grip-dots></div><div class="right"><checker-dock></checker-dock><message-bar></message-bar><map-canvas></map-canvas></div></div>
  <layers-window></layers-window><task-bar></task-bar>`);
</script>
</body>
</html>
